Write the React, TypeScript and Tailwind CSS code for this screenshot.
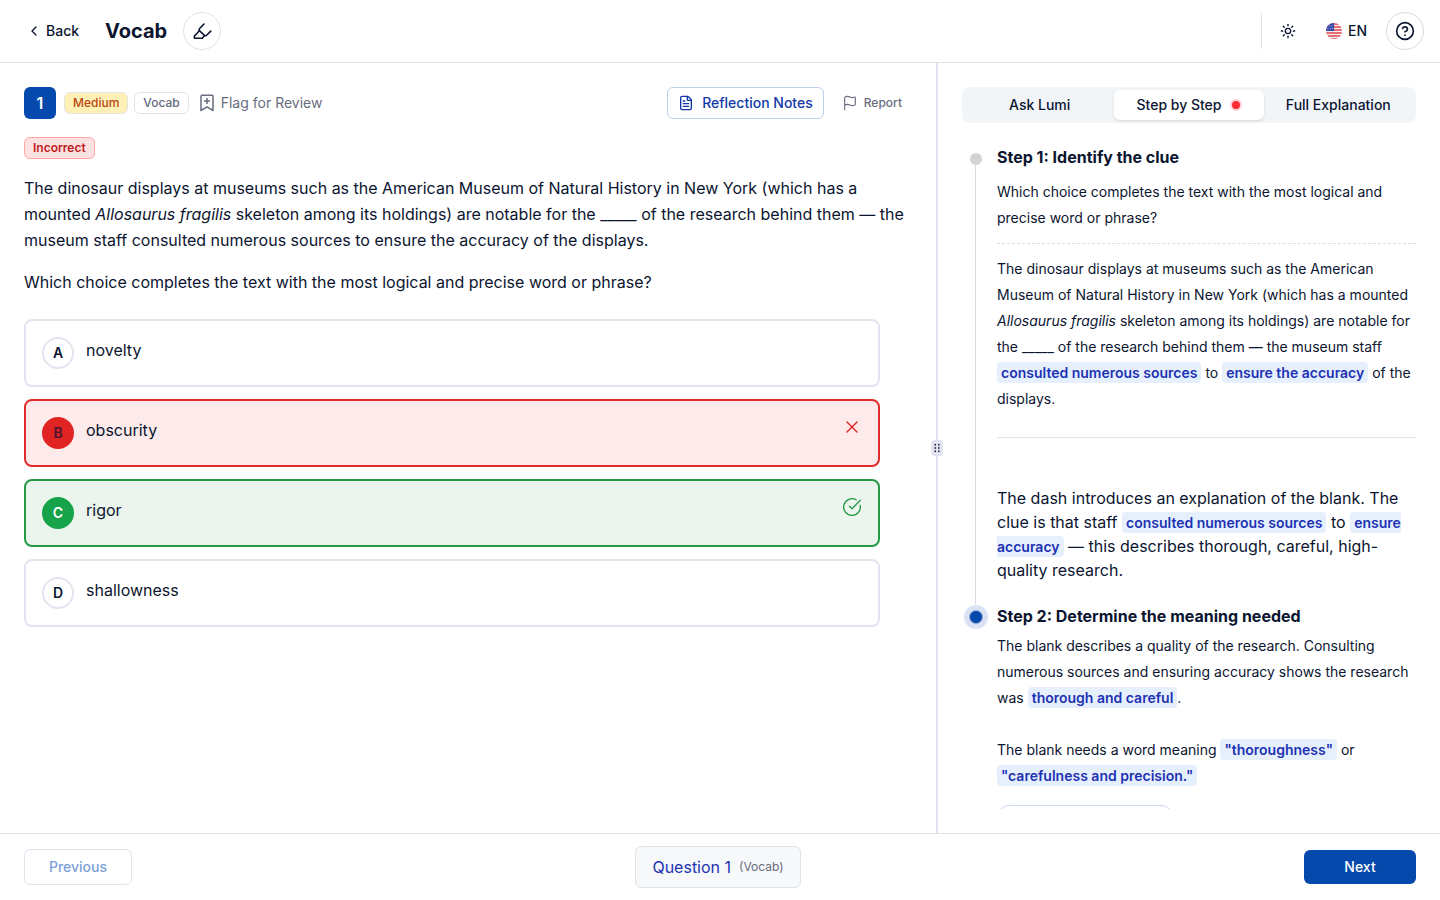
import type { ReactNode } from "react";
import { ChevronLeft, CircleCheckBig, CircleQuestionMark, FileText, Flag, Sun, X } from "lucide-react";

type Status = "idle" | "wrong" | "right";

const choices: { letter: string; text: string; status: Status }[] = [
  { letter: "A", text: "novelty", status: "idle" },
  { letter: "B", text: "obscurity", status: "wrong" },
  { letter: "C", text: "rigor", status: "right" },
  { letter: "D", text: "shallowness", status: "idle" },
];

const boxStyle: Record<Status, string> = {
  idle: "border-[#e2e4f0] bg-white",
  wrong: "border-[#e12a2a] bg-[#fdeaea]",
  right: "border-[#229a46] bg-[#ebf5ed]",
};

const letterStyle: Record<Status, string> = {
  idle: "border-[#e2e4f0] bg-white text-[#0b1530]",
  wrong: "border-[#e02424] bg-[#e02424] text-[#4c1430]",
  right: "border-[#16a34a] bg-[#16a34a] text-white",
};

function HighlighterIcon() {
  return (
    <svg width="20" height="20" viewBox="0 0 20 20" fill="none" stroke="currentColor" strokeWidth="1.6" strokeLinecap="round" strokeLinejoin="round" aria-hidden="true">
      <path d="M12 3 7.6 7.5a1.7 1.7 0 0 0-.2 2.2L2.4 15v2.2h7.8l2.4-2.7a1.7 1.7 0 0 0 2-.3l4.2-4.1" />
      <path d="m7.4 9.7 5.2 4.8" />
    </svg>
  );
}

function UsFlag() {
  return (
    <svg width="16" height="16" viewBox="0 0 16 16" aria-hidden="true">
      <clipPath id="flag-circle">
        <circle cx="8" cy="8" r="8" />
      </clipPath>
      <g clipPath="url(#flag-circle)">
        <rect width="16" height="16" fill="#f5eeee" />
        <path d="M0 1h16M0 4h16M0 7h16M0 10h16M0 13h16M0 16h16" stroke="#e0434b" strokeWidth="1.5" />
        <rect width="8" height="8" fill="#3b4bab" />
        <path d="M3 3h.8M5.5 3h.8M1.5 5.5h.8M4 5.5h.8M6.3 5.5h.8" stroke="#d5d9f2" strokeWidth=".8" />
      </g>
    </svg>
  );
}

function Mark({ children }: { children: ReactNode }) {
  return <mark className="rounded bg-[#e6f0fd] px-1 py-0.5 text-sm font-semibold text-[#1d32b4]">{children}</mark>;
}

export default function App() {
  return (
    <div className="flex h-screen flex-col overflow-hidden bg-white font-['Inter',sans-serif] text-[#0b1530]">
      <header className="flex h-[63px] shrink-0 items-center justify-between border-b border-[#dfe4e8] pr-4 pl-6">
        <div className="flex items-center">
          <button className="flex h-8 items-center gap-1 px-0.5 text-sm font-medium">
            <ChevronLeft size={16} />
            Back
          </button>
          <h1 className="ml-6 text-xl font-bold">Vocab</h1>
          <button aria-label="Highlighter" className="ml-4 flex size-[38px] items-center justify-center rounded-full border border-[#dfe1e8]">
            <HighlighterIcon />
          </button>
        </div>
        <div className="flex items-center">
          <div className="h-9 w-px bg-[#dfe4e8]" />
          <button aria-label="Theme" className="ml-[18px] flex size-4 items-center justify-center">
            <Sun size={16} />
          </button>
          <button className="ml-[30px] flex items-center gap-1.5 text-sm font-medium">
            <UsFlag />
            EN
          </button>
          <button aria-label="Help" className="ml-[19px] flex size-[38px] items-center justify-center rounded-full border border-[#d9dbe6]">
            <CircleQuestionMark size={20} />
          </button>
        </div>
      </header>

      <main className="flex min-h-0 flex-1">
        <section className="flex w-[65%] shrink-0 flex-col overflow-hidden pt-6 pr-6 pl-6">
          <div className="mr-[10px] flex items-center">
            <span className="flex size-8 items-center justify-center rounded-md bg-[#0649ac] font-semibold text-white">1</span>
            <span className="ml-2 flex h-[22px] items-center rounded-md border border-[#e4e4e0] bg-[#fff0b8] px-2 text-xs font-medium text-[#b8480c]">Medium</span>
            <span className="ml-1.5 flex h-[22px] items-center rounded-md border border-[#dfe3ea] px-2 text-xs font-medium text-[#64697c]">Vocab</span>
            <button className="ml-2 flex items-center gap-1 text-sm text-[#686c7e]">
              <svg width="20" height="20" viewBox="0 0 20 20" fill="none" stroke="currentColor" strokeWidth="1.5" strokeLinejoin="round" aria-hidden="true">
                <path d="M4 3.2a1 1 0 0 1 1-1h10a1 1 0 0 1 1 1v14.3l-6-3.6-6 3.6zM10 5v6M7 8h6" />
              </svg>
              Flag for Review
            </button>
            <button className="ml-auto flex h-8 items-center gap-2 rounded-md border border-[#bdd0ee] px-[10px] text-sm font-medium text-[#1238a8]">
              <FileText size={16} />
              Reflection Notes
            </button>
            <button className="ml-[18px] flex items-center gap-1.5 text-xs font-medium text-[#686c7e]">
              <Flag size={16} strokeWidth={1.7} />
              Report
            </button>
          </div>
          <span className="mt-[18px] flex h-[22px] w-fit items-center rounded-md border border-[#fca5a5] bg-[#fee2e2] px-2 text-xs font-semibold text-[#bd1c1c]">Incorrect</span>
          <p className="mt-4 text-base leading-[26px]">
            The dinosaur displays at museums such as the American Museum of Natural History in New York (which has a mounted <i>Allosaurus fragilis</i> skeleton among its holdings) are notable for the _____ of the research behind them — the museum staff consulted numerous sources to ensure the accuracy of the displays.
          </p>
          <p className="mt-4 text-base leading-[26px]">Which choice completes the text with the most logical and precise word or phrase?</p>
          <div className="mt-6 mr-8 flex flex-col gap-3">
            {choices.map((c) => (
              <button key={c.letter} className={`flex h-[68px] items-start rounded-lg border-2 px-4 text-left ${boxStyle[c.status]}`}>
                <span className={`mt-4 flex size-8 items-center justify-center rounded-full border-2 text-sm font-semibold ${letterStyle[c.status]}`}>{c.letter}</span>
                <span className="mt-4 ml-3 flex-1 text-base leading-[26px]">{c.text}</span>
                {c.status === "wrong" && <X size={20} strokeWidth={1.6} className="mt-4 text-[#dc2626]" />}
                {c.status === "right" && <CircleCheckBig size={20} strokeWidth={1.6} className="mt-4 text-[#229a46]" />}
              </button>
            ))}
          </div>
        </section>

        <div className="relative w-0.5 shrink-0 bg-[#e2e3ef]">
          <div className="absolute top-1/2 left-1/2 flex h-4 w-3 -translate-1/2 items-center justify-center rounded bg-[#e2e3ef]">
            <svg width="6" height="8" viewBox="0 0 6 8" fill="#0b1530" aria-hidden="true">
              <path d="M.5 0h1.5v1.5H.5zM4 0h1.5v1.5H4zM.5 3.2h1.5v1.5H.5zM4 3.2h1.5v1.5H4zM.5 6.4h1.5v1.5H.5zM4 6.4h1.5v1.5H4z" />
            </svg>
          </div>
        </div>

        <aside className="flex min-w-0 flex-1 flex-col p-6">
          <div role="tablist" className="grid h-9 shrink-0 grid-cols-3 items-center rounded-lg bg-[#f1f5f8] p-[3px] text-sm font-medium">
            <button role="tab" aria-selected={false}>Ask Lumi</button>
            <button role="tab" aria-selected={true} className="flex h-[30px] items-center justify-center gap-2 rounded-md bg-white shadow-sm">
              Step by Step
              <span className="size-3 rounded-full border-2 border-[#ffd0d5] bg-[#fb2c36]" />
            </button>
            <button role="tab" aria-selected={false}>Full Explanation</button>
          </div>

          <div className="mt-5 min-h-0 flex-1 overflow-hidden">
            <section className="grid grid-cols-[27px_1fr] gap-x-2">
              <div className="flex flex-col items-center">
                <span className="mt-[10px] size-3 shrink-0 rounded-full bg-[#d2d3d5]" />
                <span className="w-px flex-1 bg-[#dcdde2]" />
              </div>
              <div className="min-w-0 pt-0.5">
                <h2 className="text-base leading-6 font-bold">Step 1: Identify the clue</h2>
                <div className="mt-[10px] text-sm leading-[26px]">
                  <p>Which choice completes the text with the most logical and precise word or phrase?</p>
                  <p className="mt-3 border-t border-dashed border-[#dcdde2] pt-3">
                    The dinosaur displays at museums such as the American Museum of Natural History in New York (which has a mounted <i>Allosaurus fragilis</i> skeleton among its holdings) are notable for the _____ of the research behind them — the museum staff <Mark>consulted numerous sources</Mark> to <Mark>ensure the accuracy</Mark> of the displays.
                  </p>
                </div>
                <hr className="mt-[25px] border-[#dfe4e8]" />
                <p className="mt-12 pb-[22px] text-base leading-6">
                  The dash introduces an explanation of the blank. The clue is that staff <Mark>consulted numerous sources</Mark> to <Mark>ensure accuracy</Mark> — this describes thorough, careful, high-quality research.
                </p>
              </div>
            </section>
            <section className="grid grid-cols-[27px_1fr] gap-x-2">
              <div className="flex flex-col items-center pt-px">
                <span className="flex size-6 items-center justify-center rounded-full bg-[#dce1f3]">
                  <span className="size-[14px] rounded-full border border-[#8fabdc] bg-[#0649ac]" />
                </span>
              </div>
              <div className="min-w-0">
                <h2 className="text-base leading-6 font-bold">Step 2: Determine the meaning needed</h2>
                <div className="mt-[5px] text-sm leading-[26px]">
                  <p>
                    The blank describes a quality of the research. Consulting numerous sources and ensuring accuracy shows the research was <Mark>thorough and careful</Mark>.
                  </p>
                  <p className="mt-[26px]">
                    The blank needs a word meaning <Mark>"thoroughness"</Mark> or <Mark>"carefulness and precision."</Mark>
                  </p>
                </div>
                <button aria-label="Continue" className="mt-4 h-9 w-44 rounded-xl border border-[#cbd8ec]" />
              </div>
            </section>
          </div>
        </aside>
      </main>

      <footer className="flex h-[67px] shrink-0 items-center justify-between border-t border-[#dfe4e8] px-6">
        <button disabled className="h-9 w-[108px] rounded-md border border-[#e2e4f0] text-sm font-medium text-[#7d9fd8]">Previous</button>
        <button className="flex h-[42px] items-center gap-2 rounded-md border border-[#dfe4e8] bg-[#f6f8fa] px-4 text-base text-[#1d32b4]">
          Question 1 <span className="text-xs text-[#686c7e]">(Vocab)</span>
        </button>
        <button className="h-[34px] w-28 rounded-md bg-[#0649ac] text-sm font-medium text-white">Next</button>
      </footer>
    </div>
  );
}
